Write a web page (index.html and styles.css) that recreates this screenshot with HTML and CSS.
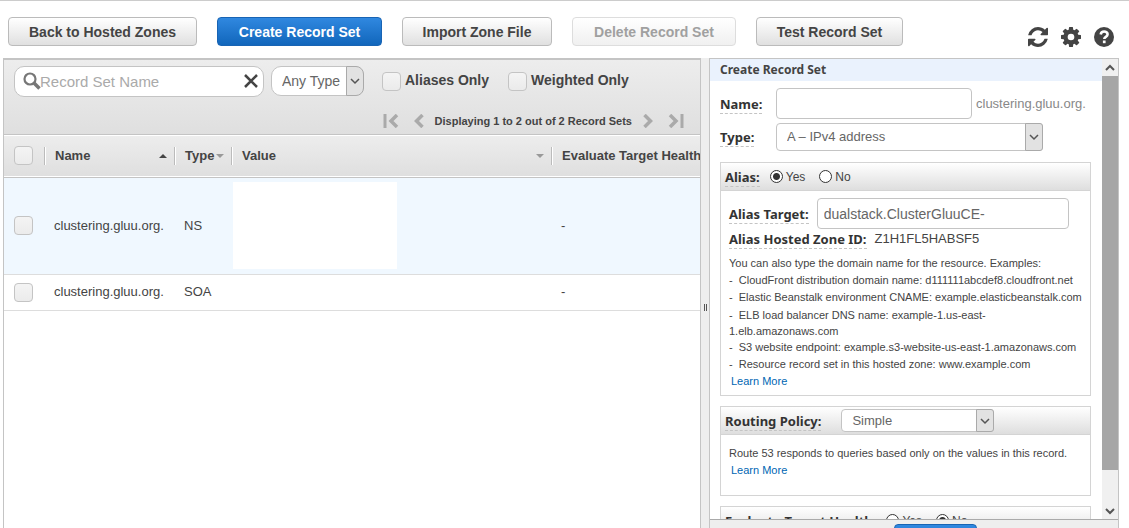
FILE: index.html
```html
<!DOCTYPE html>
<html lang="en">
<head>
<meta charset="utf-8">
<title>Hosted Zone Record Sets</title>
<link rel="stylesheet" href="styles.css">
</head>
<body>
<div class="app">
  <header class="topbar">
    <div class="actions">
      <button class="btn" type="button">Back to Hosted Zones</button>
      <button class="btn btn-primary" type="button">Create Record Set</button>
      <button class="btn" type="button">Import Zone File</button>
      <button class="btn" type="button" disabled>Delete Record Set</button>
      <button class="btn" type="button">Test Record Set</button>
    </div>
    <div class="tools">
      <button class="tool" type="button" aria-label="Refresh">
        <svg viewBox="0 0 1536 1536" width="20" height="20"><path d="M1511 928q0 5-1 7-64 268-268 434.500T764 1536q-146 0-282.500-55T238 1324l-129 129q-19 19-45 19t-45-19-19-45V960q0-26 19-45t45-19h448q26 0 45 19t19 45-19 45l-137 137q71 66 161 102t187 36q134 0 250-65t186-179q11-17 53-117 8-23 30-23h192q13 0 22.500 9.500t9.500 22.500zM1536 128v448q0 26-19 45t-45 19h-448q-26 0-45-19t-19-45 19-45l138-138Q969 256 768 256q-134 0-250 65T332 500q-11 17-53 117-8 23-30 23H50q-13 0-22.500-9.500T18 608v-7q65-268 270-434.500T768 0q146 0 284 55.500T1297 212l130-129q19-19 45-19t45 19 19 45z"/></svg>
      </button>
      <button class="tool" type="button" aria-label="Settings">
        <svg viewBox="0 0 1536 1536" width="20" height="20"><path fill-rule="evenodd" d="M1024 768a256 256 0 1 0-512 0 256 256 0 0 0 512 0zm512-109v222q0 12-8 23t-20 13l-185 28q-19 54-39 91 35 50 107 138 10 12 10 25t-9 23q-27 37-99 108t-94 71q-12 0-26-9l-138-108q-44 23-91 38-16 136-29 186-7 28-36 28H657q-14 0-24.500-8.500T621 1506l-28-184q-49-16-90-37l-141 107q-10 9-25 9-14 0-25-11-126-114-165-168-7-10-7-23 0-12 8-23 15-21 51-66.500t54-70.500q-27-50-41-99L29 913q-13-2-21-12.500T0 877V655q0-12 8-23t19-13l186-28q14-46 39-92-40-57-107-138-10-12-10-24 0-10 9-23 26-36 98.500-107.500T337 135q13 0 26 10l138 107q44-23 91-38 16-136 29-186 7-28 36-28h222q14 0 24.500 8.500T915 30l28 184q49 16 90 37l142-107q9-9 24-9 13 0 25 10 129 119 165 170 7 8 7 22 0 12-8 23-15 21-51 66.500t-54 70.500q26 50 41 98l183 28q13 2 21 12.500t8 23.500z"/></svg>
      </button>
      <button class="tool" type="button" aria-label="Help">
        <svg viewBox="0 0 20 20" width="20" height="20"><circle cx="10" cy="10" r="10"/><path d="M6.700 7.500C7 5.400 8.300 4.500 10.100 4.500c2 0 3.500 1.100 3.500 2.800 0 2.700-3.300 2.500-3.300 4.700" fill="none" stroke="#fff" stroke-width="2.600"/><rect x="8.900" y="13.500" width="2.700" height="2.700" fill="#fff"/></svg>
      </button>
    </div>
  </header>

  <main class="workspace">
    <section class="records">
      <div class="filters">
        <div class="filter-row">
          <div class="search">
            <input class="search-input" type="text" placeholder="Record Set Name" aria-label="Record Set Name">
            <svg class="search-icon" viewBox="0 0 18 18" width="18" height="18"><circle cx="7" cy="7" r="5.500" fill="none" stroke="#777" stroke-width="2.200"/><path d="M11 11l5.500 5.500" stroke="#777" stroke-width="3.600"/></svg>
            <button class="search-clear" type="button" aria-label="Clear"><svg viewBox="0 0 14 14" width="14" height="14"><path d="M1 1l12 12M13 1L1 13" stroke="#444" stroke-width="2.500"/></svg></button>
          </div>
          <div class="select type-filter">
            <select aria-label="Record type"><option>Any Type</option></select>
            <span class="arrow"><svg viewBox="0 0 8 6" width="8" height="6"><path d="M0 1l4 4 4-4"/></svg></span>
          </div>
          <label class="check-label"><input class="check" type="checkbox">Aliases Only</label>
          <label class="check-label"><input class="check" type="checkbox">Weighted Only</label>
        </div>
        <nav class="pager" aria-label="Pages">
          <button type="button" aria-label="First page"><svg viewBox="0 0 16 14" width="16" height="14"><path d="M2 0v14" stroke-width="3"/><path d="M14 1L8 7l6 6" stroke-width="3.500"/></svg></button>
          <button type="button" aria-label="Previous page"><svg viewBox="0 0 10 14" width="10" height="14"><path d="M8.500 1l-6 6 6 6" stroke-width="3.500"/></svg></button>
          <span class="pager-text">Displaying 1 to 2 out of 2 Record Sets</span>
          <button type="button" aria-label="Next page"><svg viewBox="0 0 10 14" width="10" height="14"><path d="M1.500 1l6 6-6 6" stroke-width="3.500"/></svg></button>
          <button type="button" aria-label="Last page"><svg viewBox="0 0 16 14" width="16" height="14"><path d="M14 0v14" stroke-width="3"/><path d="M2 1l6 6-6 6" stroke-width="3.500"/></svg></button>
        </nav>
      </div>
      <table class="grid">
        <colgroup><col class="c-check"><col class="c-name"><col class="c-type"><col class="c-value"><col class="c-health"></colgroup>
        <thead>
          <tr>
            <th><input class="check" type="checkbox" aria-label="Select all"></th>
            <th><div class="th"><span>Name</span><svg viewBox="0 0 8 4" width="8" height="4"><path d="M0 4l4-4 4 4z" fill="#444"/></svg></div></th>
            <th><div class="th"><span>Type</span><svg viewBox="0 0 8 4" width="8" height="4"><path d="M0 0h8L4 4z" fill="#999"/></svg></div></th>
            <th><div class="th"><span>Value</span><svg viewBox="0 0 8 4" width="8" height="4"><path d="M0 0h8L4 4z" fill="#999"/></svg></div></th>
            <th><div class="th"><span>Evaluate Target Health</span></div></th>
          </tr>
        </thead>
        <tbody>
          <tr class="row-ns">
            <td><input class="check" type="checkbox" aria-label="Select NS record"></td>
            <td>clustering.gluu.org.</td><td>NS</td><td class="value"><div class="blank"></div></td><td>-</td>
          </tr>
          <tr class="row-soa">
            <td><input class="check" type="checkbox" aria-label="Select SOA record"></td>
            <td>clustering.gluu.org.</td><td>SOA</td><td></td><td>-</td>
          </tr>
        </tbody>
      </table>
    </section>

    <div class="splitter"><span class="grip"></span></div>

    <aside class="editor">
      <div class="editor-body">
        <form class="form">
          <h2 class="form-title">Create Record Set</h2>
          <div class="fields">
            <label class="label" for="name"><span>Name:</span></label>
            <div class="name-field"><input class="text" id="name" type="text"><span class="suffix">clustering.gluu.org.</span></div>
            <label class="label" for="type"><span>Type:</span></label>
            <div class="select wide">
              <select id="type"><option>A – IPv4 address</option></select>
              <span class="arrow"><svg viewBox="0 0 8 6" width="8" height="6"><path d="M0 1l4 4 4-4"/></svg></span>
            </div>
          </div>

          <div class="box">
            <div class="box-head" role="radiogroup" aria-labelledby="alias">
              <span class="label" id="alias"><span>Alias:</span></span>
              <label class="radio-label"><input class="radio" type="radio" name="alias" checked>Yes</label>
              <label class="radio-label"><input class="radio" type="radio" name="alias">No</label>
            </div>
            <div class="box-body">
              <div class="target-row">
                <label class="label" for="target"><span>Alias Target:</span></label>
                <input class="text" id="target" type="text" value="dualstack.ClusterGluuCE-">
              </div>
              <div class="zone-row"><span class="label"><span>Alias Hosted Zone ID:</span></span><span class="zone-id">Z1H1FL5HABSF5</span></div>
              <div class="hint">
                <p>You can also type the domain name for the resource. Examples:</p>
                <p>-&nbsp; CloudFront distribution domain name: d111111abcdef8.cloudfront.net</p>
                <p>-&nbsp; Elastic Beanstalk environment CNAME: example.elasticbeanstalk.com</p>
                <p class="wrapped">-&nbsp; ELB load balancer DNS name: example-1.us-east-<br>1.elb.amazonaws.com</p>
                <p>-&nbsp; S3 website endpoint: example.s3-website-us-east-1.amazonaws.com</p>
                <p>-&nbsp; Resource record set in this hosted zone: www.example.com</p>
                <p><a class="more" href="#">Learn More</a></p>
              </div>
            </div>
          </div>

          <div class="box routing">
            <div class="box-head">
              <label class="label" for="policy"><span>Routing Policy:</span></label>
              <div class="select policy">
                <select id="policy"><option>Simple</option></select>
                <span class="arrow"><svg viewBox="0 0 8 6" width="8" height="6"><path d="M0 1l4 4 4-4"/></svg></span>
              </div>
            </div>
            <div class="box-body">
              <div class="hint">
                <p>Route 53 responds to queries based only on the values in this record.</p>
                <p><a class="more" href="#">Learn More</a></p>
              </div>
            </div>
          </div>

          <div class="box">
            <div class="box-head" role="radiogroup" aria-labelledby="health">
              <span class="label" id="health"><span>Evaluate Target Health:</span></span>
              <label class="radio-label"><input class="radio" type="radio" name="health">Yes</label>
              <label class="radio-label"><input class="radio" type="radio" name="health" checked>No</label>
            </div>
          </div>
        </form>
        <div class="scrollbar" aria-hidden="true">
          <span class="scroll-end"><svg viewBox="0 0 8 6" width="8" height="6"><path d="M0 5l4-4 4 4"/></svg></span>
          <span class="thumb"></span>
          <span class="scroll-end"><svg viewBox="0 0 8 6" width="8" height="6"><path d="M0 1l4 4 4-4"/></svg></span>
        </div>
      </div>
      <footer class="editor-foot"><button class="btn btn-primary" type="button" aria-label="Create"></button></footer>
    </aside>
  </main>
</div>
</body>
</html>
```

FILE: styles.css
```css
* { box-sizing: border-box; }

body {
  margin: 0;
  background: #fff;
  color: #444;
  font: 13px/16px "Liberation Sans", Arial, sans-serif;
}

button, input, select { font: inherit; color: inherit; margin: 0; }
svg { display: block; }

.app {
  height: 100vh;
  overflow: hidden;
  display: flex;
  flex-direction: column;
  border-top: 1px solid #ccc;
}

/* Top bar */
.topbar {
  flex: none;
  display: flex;
  justify-content: space-between;
  padding: 16px 15px 11px 8px;
}
.actions {
  display: grid;
  grid-template-columns: 189px 165px 150px 164px 147px;
  gap: 20px;
}
.btn {
  height: 29px;
  padding: 0;
  border: 1px solid #bbb;
  border-radius: 4px;
  background: linear-gradient(#fff, #e0e0e0);
  font-size: 14px;
  font-weight: bold;
  color: #444;
  white-space: nowrap;
}
.btn:disabled { border-color: #ddd; background: linear-gradient(#fff, #f0f0f0); color: #a0a0a0; }
.btn-primary {
  border-color: #1864b4;
  background: linear-gradient(#3088e0, #1166bb);
  color: #fff;
}
.tools { display: flex; gap: 13px; padding-top: 10px; }
.tool { padding: 0; border: 0; background: none; height: 20px; fill: #444; }

.workspace { flex: 1; min-height: 0; display: flex; padding: 0 10px 0 3px; }

/* Record list */
.records {
  flex: 1;
  min-width: 0;
  overflow: hidden;
  border: solid #c4c4c4;
  border-width: 2px 1px 0;
}
.filters {
  padding: 6px 16px 5px 10px;
  border-bottom: 1px solid #c4c4c4;
  background: linear-gradient(#ededed, #dfdfdf);
}
.filter-row { display: flex; align-items: flex-start; }
.search { position: relative; width: 250px; }
.search-input {
  display: block;
  width: 100%;
  height: 31px;
  padding: 0 36px 0 25px;
  border: 1px solid #c4c4c4;
  border-radius: 10px;
  background: #fff;
  font-size: 15px;
}
.search-input::placeholder { color: #aaa; opacity: 1; }
.search-icon { position: absolute; left: 9px; top: 6px; }
.search-clear { position: absolute; right: 6px; top: 8px; padding: 0; border: 0; background: none; }

.select { position: relative; }
.select select {
  display: block;
  width: 100%;
  height: 30px;
  padding: 0 18px 0 10px;
  border: 1px solid #c4c4c4;
  border-radius: 4px;
  background: #fff;
  appearance: none;
  font-size: 13px;
  color: #666;
}
.arrow {
  position: absolute;
  top: 0;
  right: 0;
  bottom: 0;
  width: 18px;
  display: flex;
  align-items: center;
  justify-content: center;
  border: 1px solid #aaa;
  border-radius: 0 3px 3px 0;
  background: #e2e2e2;
  pointer-events: none;
}
.arrow svg, .scroll-end svg { fill: none; stroke: #555; stroke-width: 1.5; overflow: visible; }
.type-filter { width: 93px; margin: 0 18px 0 7px; }
.type-filter select { border-radius: 10px; font-size: 14px; }
.type-filter .arrow { border-radius: 0 8px 8px 0; }

.check {
  display: block;
  flex: none;
  width: 19px;
  height: 19px;
  border: 1px solid #c4c4c4;
  border-radius: 4px;
  background: linear-gradient(#f4f4f4, #ebebeb);
  appearance: none;
}
.check-label {
  display: flex;
  gap: 4px;
  margin: 6px 19px 0 0;
  font-size: 14px;
  font-weight: bold;
}

.pager {
  display: flex;
  align-items: center;
  justify-content: flex-end;
  gap: 15px;
  padding-top: 16px;
}
.pager button { padding: 0; border: 0; background: none; }
.pager svg { fill: none; stroke: #aaa; }
.pager-text { margin: 0 -4px; font-size: 11px; font-weight: bold; }

.grid { width: 100%; table-layout: fixed; border-collapse: collapse; }
.c-check { width: 40px; }
.c-name { width: 130px; }
.c-type { width: 57px; }
.c-value { width: 320px; }
.grid th, .grid td { padding: 0 0 0 10px; text-align: left; }
.grid thead tr {
  height: 42px;
  border-bottom: 1px solid #c4c4c4;
  background: linear-gradient(#fff 0 1px, #ededed 1px, #dfdfdf);
}
.th {
  height: 18px;
  display: flex;
  align-items: center;
  justify-content: space-between;
  margin-left: -10px;
  padding: 0 7px 0 10px;
  border-left: 1px solid #bbb;
  box-shadow: inset 1px 0 #fff;
  white-space: nowrap;
}
.grid tbody tr { border-bottom: 1px solid #ddd; }
.row-ns { height: 97px; background: #f0f8ff; }
.row-soa { height: 36px; }
.grid .value { padding-left: 2px; }
.blank { width: 164px; height: 87px; background: #fff; }

/* Divider between panels */
.splitter {
  flex: none;
  width: 8px;
  display: flex;
  align-items: center;
  justify-content: center;
  background: #eee;
}
.grip { width: 3px; height: 7px; margin-top: 28px; border: solid #555; border-width: 0 1px; }

/* Editor */
.editor {
  flex: none;
  width: 410px;
  display: flex;
  flex-direction: column;
  border: 1px solid #c4c4c4;
  border-bottom: 0;
}
.editor-body { flex: 1; min-height: 0; display: flex; overflow: hidden; }
.form { flex: 1; min-width: 0; overflow: hidden; }
.form-title {
  margin: 0;
  padding: 3px 10px;
  background: #eaf2fd;
  font: bold 12px/16px "Noto Sans", sans-serif;
}
.label {
  flex: none;
  font: bold 13px/16px "Noto Sans", sans-serif;
  color: #333;
  white-space: nowrap;
}
.label span { border-bottom: 1px dashed #c4c4c4; }
.fields {
  display: grid;
  grid-template-columns: 56px 1fr;
  row-gap: 4px;
  align-items: center;
  padding: 7px 10px 11px;
}
.name-field { display: flex; align-items: center; gap: 4px; }
.name-field .text { width: 196px; }
.text {
  height: 31px;
  padding: 0 6px;
  border: 1px solid #c4c4c4;
  border-radius: 4px;
  background: #fff;
  font-size: 14px;
  color: #666;
}
.suffix { color: #888; }
.wide { width: 267px; }
.wide select { height: 28px; }

.box { margin: 0 11px 10px 10px; border: 1px solid #d4d4d4; }
.box-head {
  height: 28px;
  display: flex;
  align-items: center;
  padding: 0 4px;
  border-bottom: 1px solid #d4d4d4;
  background: linear-gradient(#fff, #dedede);
}
.box-body { padding: 7px 8px 5px; }
.radio-label { display: flex; align-items: center; gap: 3px; margin-left: 10px; font-size: 12px; }
.radio-label + .radio-label { margin-left: 14px; }
.radio {
  width: 13px;
  height: 13px;
  border: 1px solid #333;
  border-radius: 50%;
  background: #fff;
  appearance: none;
}
.radio:checked { background: radial-gradient(circle, #333 0 3px, #fff 4px); }
.target-row { display: flex; align-items: center; gap: 8px; }
.target-row .text { flex: none; width: 252px; }
.zone-row { display: flex; gap: 8px; padding: 2px 0 8px; }
.hint { font-size: 11px; line-height: 17px; white-space: nowrap; }
.hint p { margin: 0; }
.hint .wrapped { padding-top: 1px; line-height: 16px; }
.more { margin-left: 2px; color: #0066b3; text-decoration: none; }
.policy { width: 153px; margin-left: 20px; }
.policy select { height: 23px; }
.routing .box-body { padding: 10px 8px 16px; }

.scrollbar { flex: none; width: 16px; display: flex; flex-direction: column; background: #f0f0f0; }
.scroll-end { flex: none; height: 17px; display: flex; align-items: center; justify-content: center; }
.scroll-end svg { stroke-width: 2; }
.thumb { flex: 1; margin-bottom: 32px; background: #a6a6a6; }
.editor-foot {
  flex: none;
  height: 9px;
  overflow: hidden;
  padding: 4px 60px 0 103px;
  border-top: 1px solid #aaa;
  background: #eee;
  text-align: center;
}
.editor-foot .btn { width: 83px; }
```
